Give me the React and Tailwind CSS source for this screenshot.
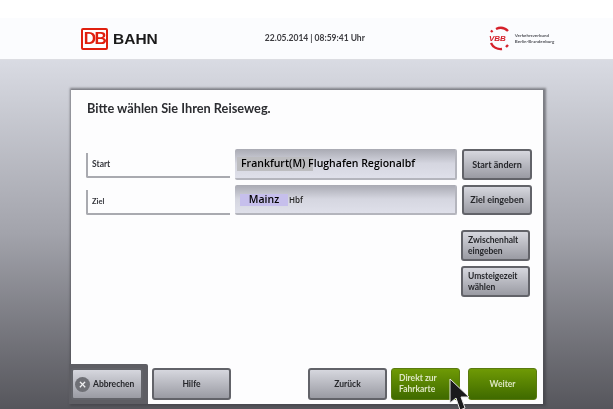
const GREY_BTN =
  "flex items-center justify-center rounded-[3px] border-2 border-[#626369] bg-gradient-to-b from-[#d6d7de] to-[#9a9ba3] text-[#26272b] font-bold";
const GREEN_BTN =
  "flex rounded-[3px] border border-[#5a7a10] bg-gradient-to-b from-[#6f9a05] to-[#3f6a00] text-[#dde6c2] font-bold";
const FIELD =
  "h-full w-[222px] rounded-[2px] border-r-2 border-b-2 border-[#b4b5bd] bg-gradient-to-b from-[#a9aab3] via-[#d5d6e0] to-[#dfe0ea] font-['Open_Sans',sans-serif]";

function Route({ label, small, children, btn, height, labelBox }) {
  return (
    <div className={`flex ${height} items-end`}>
      <div
        className={`flex ${labelBox} w-[144px] items-center rounded-bl-[2px] border-b-2 border-l-2 border-[#a9aab0] pl-[4px] font-bold text-[#33343a] ${small ? "text-[7.5px]" : "text-[8.5px]"}`}
      >
        {label}
      </div>
      <div className="ml-[5px] h-full">{children}</div>
      <button className={`ml-[5px] h-full w-[70px] text-[9px] ${GREY_BTN}`}>{btn}</button>
    </div>
  );
}

function TwoLine({ children }) {
  return (
    <button className={`h-[31px] w-[69px] !justify-start pl-[5px] text-left text-[8.5px] leading-[11px] ${GREY_BTN}`}>
      <span>{children}</span>
    </button>
  );
}

export default function App() {
  return (
    <div className="relative flex h-[409px] w-[613px] flex-col overflow-hidden bg-white font-['Lato',sans-serif] blur-[0.5px]">
      <div className="h-[18px]" />

      {/* header */}
      <header className="flex h-[42px] items-center border-b border-[#dcdde2] bg-[#fbfcfe] pl-[81px]">
        <div className="flex h-[22px] w-[27px] items-center justify-center rounded-[2px] border-[2px] border-[#e0200f] bg-white text-[17px] font-bold tracking-[-1.5px] text-[#e0200f] font-['Liberation_Sans',sans-serif]">
          DB
        </div>
        <span className="ml-[5px] text-[15.5px] font-black text-[#1a1a1a] font-['Liberation_Sans',sans-serif]">BAHN</span>
        <span className="ml-[107px] text-[8.5px] font-bold text-[#3c3c40]">22.05.2014 | 08:59:41 Uhr</span>
        <svg className="ml-[123px]" width="24" height="25" viewBox="0 0 24 25" fill="none" stroke="#d5202a" strokeWidth="2.4">
          <path d="M8 3 A10.5 10.5 0 0 1 20 5" />
          <path d="M3 6 L4.5 4.5" />
          <path d="M3 17 A10.5 10.5 0 0 0 14 23" />
          <path d="M18 21 L20 19" />
          <text x="1" y="15" fontSize="8" fontWeight="900" fontStyle="italic" fill="#d5202a" stroke="none" fontFamily="Liberation Sans">VBB</text>
        </svg>
        <div className="ml-[3px] text-[4.5px] font-bold leading-[6px] text-[#55565c]">
          <div>Verkehrsverbund</div>
          <div>Berlin-Brandenburg</div>
        </div>
      </header>

      {/* main */}
      <main className="flex-1 bg-gradient-to-b from-[#d9dbe3] via-[#a2a3ab] to-[#56565c] pl-[71px] pt-[30px]">
        <div className="relative flex h-[314px] w-[472px] flex-col bg-[#fdfdfe] shadow-[1px_0_2px_2px_rgba(60,60,66,0.55)]">
          <h1 className="pl-[16px] pt-[9px] text-[12.75px] font-bold text-[#2c2d31]">Bitte wählen Sie Ihren Reiseweg.</h1>

          <div className="mt-[31px] flex flex-col gap-[5px] pl-[15px]">
            <Route label="Start" btn="Start ändern" height="h-[31px]" labelBox="mb-[2px] h-[25px]">
              <div className={`${FIELD} relative flex items-center pl-[6px] pt-[1px] text-[10.5px] font-semibold text-black`}>
                <span className="absolute left-[2px] top-[8px] h-[14px] w-[76px] bg-[#bdbdc0]" />
                <span className="relative">Frankfurt(M) Flughafen Regionalbf</span>
              </div>
            </Route>
            <Route label="Ziel" small btn="Ziel eingeben" height="h-[30px]" labelBox="h-[25px]">
              <div className={`${FIELD} flex items-center pl-[5px] pt-[1px] text-[8px] font-semibold text-[#222]`}>
                <span className="flex h-[12px] w-[48px] items-center justify-center bg-[#c6bfec] text-[10.5px] text-black">Mainz</span>
                <span className="ml-[1px]">Hbf</span>
              </div>
            </Route>
          </div>

          <div className="mt-[15px] ml-[390px] flex flex-col gap-[5px]">
            <TwoLine>Zwischenhalt<br />eingeben</TwoLine>
            <TwoLine>Umsteigezeit<br />wählen</TwoLine>
          </div>

          {/* footer buttons */}
          <div className="mt-auto mb-[4px] flex h-[32px] text-[8.5px]">
            <button className={`relative z-10 w-[72px] justify-start pl-[2px] ${GREY_BTN}`}>
              <span className="mr-[3px] flex h-[15px] w-[15px] items-center justify-center rounded-full bg-[#6f7076] text-[13px] leading-none text-[#f0f0f2]">×</span>
              Abbrechen
            </button>
            <button className={`ml-[9px] w-[79px] ${GREY_BTN}`}>Hilfe</button>
            <button className={`ml-[77px] w-[79px] ${GREY_BTN}`}>Zurück</button>
            <button className={`ml-[4px] w-[69px] flex-col justify-center pl-[7px] text-left leading-[11px] ${GREEN_BTN}`}>
              <span>Direkt zur</span>
              <span>Fahrkarte</span>
            </button>
            <button className={`ml-[8px] w-[69px] items-center justify-center ${GREEN_BTN}`}>Weiter</button>
          </div>

          {/* cut-out behind Abbrechen */}
          <div className="absolute bottom-0 left-[-2px] h-[40px] w-[79px] rounded-tr-[2px] bg-[#5e5e64]" />
        </div>
      </main>

      {/* mouse pointer */}
      <svg className="absolute left-[449px] top-[378px]" width="24" height="34" viewBox="0 0 24 34">
        <path d="M1 1 L1 25 L7 20 L11 32 L16 30 L12 19 L20 19 Z" fill="#1a1a1c" stroke="#e8e8e8" strokeWidth="1" />
      </svg>
    </div>
  );
}
